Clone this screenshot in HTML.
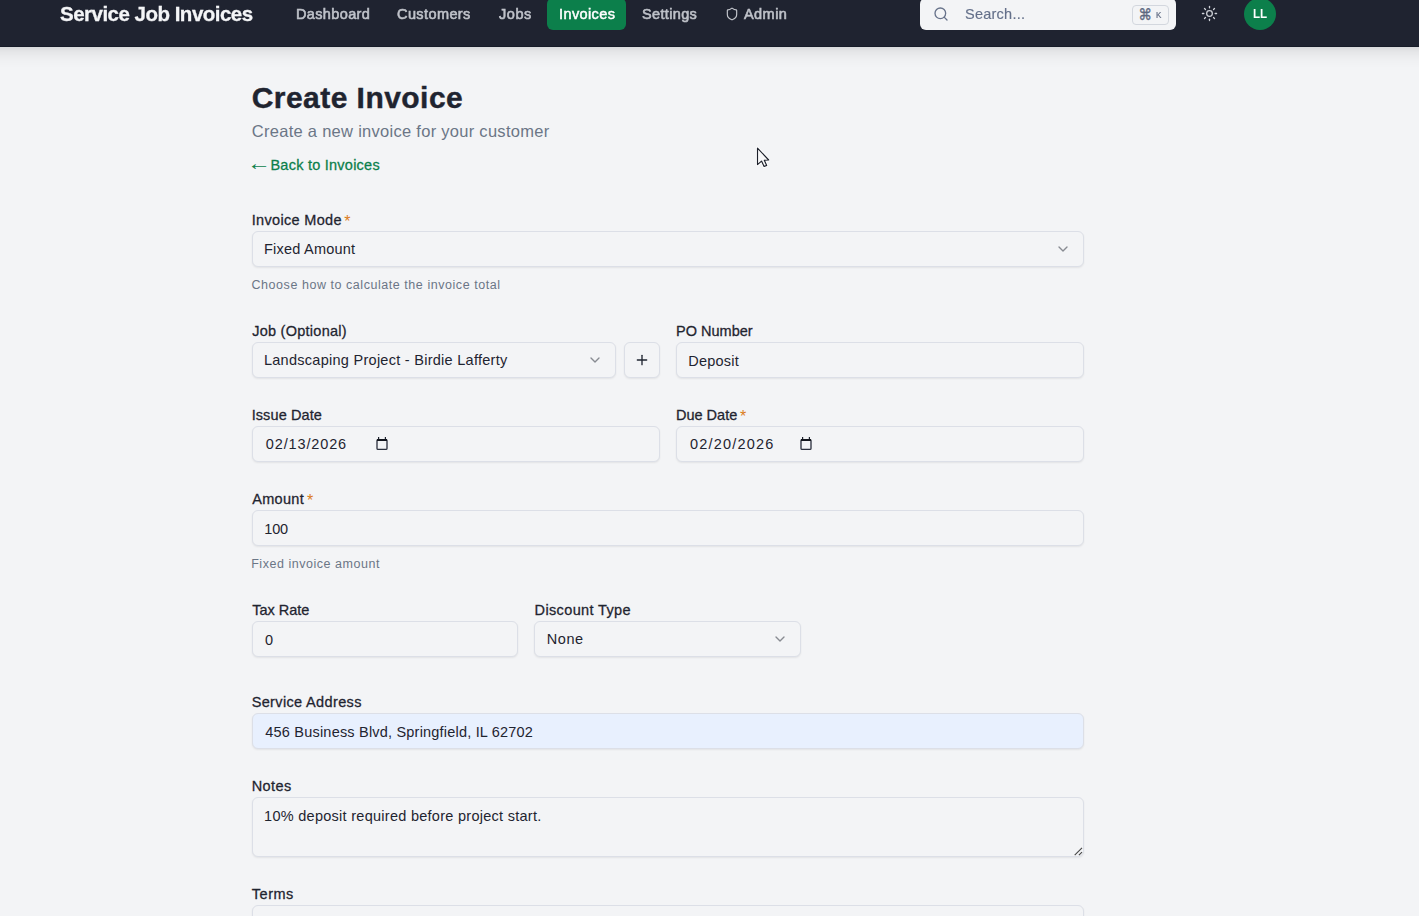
<!DOCTYPE html>
<html lang="en">
<head>
<meta charset="utf-8">
<title>Create Invoice - Service Job Invoices</title>
<style>
*{box-sizing:border-box;margin:0;padding:0}
html,body{width:1419px;height:916px;overflow:hidden}
body{background:#f3f4f6;font-family:"Liberation Sans",sans-serif;position:relative;color:#1f2430}
.t{position:absolute;white-space:nowrap;line-height:1;display:block}
.nav{position:absolute;left:-40px;top:-17px;width:1499px;height:64px;background:#1f2330;border-bottom:1px solid #171c28;box-shadow:0 10px 15px -3px rgba(0,0,0,.09),0 4px 6px -4px rgba(0,0,0,.08)}
.pill{position:absolute;left:547px;top:-2px;width:79px;height:32px;border-radius:6px;background:#0c7f4b}
.search{position:absolute;left:920px;top:-2px;width:256px;height:32px;border-radius:6px;background:#f3f4f6}
.kbd{position:absolute;left:1132px;top:5px;width:37px;height:20px;border:1px solid #d3d7de;border-radius:4px;background:#f3f4f6}
.avatar{position:absolute;left:1244px;top:-2px;width:32px;height:32px;border-radius:50%;background:#0c7f4b}
.box{position:absolute;height:36px;border:1px solid #dcdfe7;border-radius:6px;background:#f3f4f6;box-shadow:0 1px 2px rgba(0,0,0,.07)}
.box.af{background:#e8f0fe}
svg{position:absolute;overflow:visible}
.ic{fill:none;stroke-linecap:round;stroke-linejoin:round}
.g{will-change:transform}
a{text-decoration:none}
h1,p,label,kbd{font-weight:400;font-family:inherit}

</style>
</head>
<body>
<header>
<nav class="nav"></nav>
<div class="pill"></div>
<div class="search"></div>
<div class="kbd"></div>
<div class="avatar"></div>
<!-- shield -->
<svg class="ic" style="left:725px;top:7px" width="14" height="14" viewBox="0 0 24 24" stroke="#c3c6cc" stroke-width="2"><path d="M20 13c0 5-3.5 7.5-7.66 8.95a1 1 0 0 1-.67-.01C7.5 20.5 4 18 4 13V6a1 1 0 0 1 1-1c2 0 4.5-1.2 6.24-2.72a1.17 1.17 0 0 1 1.52 0C14.51 3.81 17 5 19 5a1 1 0 0 1 1 1z"/></svg>
<!-- search -->
<svg class="ic" style="left:933px;top:6px" width="16" height="16" viewBox="0 0 24 24" stroke="#67728a" stroke-width="2"><circle cx="11" cy="11" r="8"/><path d="m21 21-4.3-4.3"/></svg>
<!-- sun -->
<svg class="ic" style="left:1201.4px;top:5.4px" width="17" height="17" viewBox="0 0 24 24" stroke="#cfd2d8" stroke-width="1.8"><circle cx="12" cy="12" r="4"/><path d="M12 2v2"/><path d="M12 20v2"/><path d="m4.93 4.93 1.41 1.41"/><path d="m17.66 17.66 1.41 1.41"/><path d="M2 12h2"/><path d="M20 12h2"/><path d="m6.34 17.66-1.41 1.41"/><path d="m19.07 4.93-1.41 1.41"/></svg>
<span class="t" style="left:1138.6px;top:8.6px;font-size:13.4px;font-family:'DejaVu Sans',sans-serif;color:#5d6880;-webkit-text-stroke:.3px #5d6880;transform:scaleY(1.17);transform-origin:0 11.34px">⌘</span>
<a href="#" class="t g" style="left:59.75px;top:4px;font-size:20.5px;color:#f4f5f7;letter-spacing:-0.509px;font-weight:700;-webkit-text-stroke:0.3px #f4f5f7">Service Job Invoices</a>
<a href="#" class="t g" style="left:295.80px;top:7px;font-size:14.5px;color:#bfc2c9;letter-spacing:0.360px;-webkit-text-stroke:0.6px #bfc2c9">Dashboard</a>
<a href="#" class="t g" style="left:397.10px;top:7px;font-size:14.5px;color:#bfc2c9;letter-spacing:0.406px;-webkit-text-stroke:0.6px #bfc2c9">Customers</a>
<a href="#" class="t g" style="left:498.60px;top:7px;font-size:14.5px;color:#bfc2c9;letter-spacing:0.574px;-webkit-text-stroke:0.6px #bfc2c9">Jobs</a>
<a href="#" class="t g" style="left:558.95px;top:7px;font-size:14.5px;color:#ffffff;letter-spacing:0.394px;-webkit-text-stroke:0.5px #ffffff">Invoices</a>
<a href="#" class="t g" style="left:642.45px;top:7px;font-size:14.5px;color:#bfc2c9;letter-spacing:0.344px;-webkit-text-stroke:0.6px #bfc2c9">Settings</a>
<a href="#" class="t g" style="left:743.75px;top:7px;font-size:14.5px;color:#bfc2c9;letter-spacing:0.441px;-webkit-text-stroke:0.6px #bfc2c9">Admin</a>
<span class="t g" style="left:965.07px;top:7px;font-size:14.5px;color:#64708a;letter-spacing:0.244px;-webkit-text-stroke:0.15px #64708a">Search...</span>
<kbd class="t g" style="left:1155.70px;top:12px;font-size:8px;color:#5f6a82;letter-spacing:0.000px;-webkit-text-stroke:0.2px #5f6a82;transform:scaleY(1.1);transform-origin:0 6px">K</kbd>
<span class="t g" style="left:1252.65px;top:8px;font-size:11.6px;color:#ffffff;letter-spacing:-0.182px;font-weight:700;transform:scaleY(1.1);transform-origin:0 10px">LL</span>
</header>
<main>
<span class="t" style="left:247.1px;top:152.87px;font-size:20px;color:#0c7f4b;transform:scaleX(1.2);transform-origin:0 0">←</span>
<!-- form boxes -->
<div class="box" style="left:252px;top:231px;width:832px"></div>
<div class="box" style="left:252px;top:342px;width:364px"></div>
<div class="box" style="left:624px;top:342px;width:36px"></div>
<div class="box" style="left:676px;top:342px;width:408px"></div>
<div class="box" style="left:252px;top:426px;width:408px"></div>
<div class="box" style="left:676px;top:426px;width:408px"></div>
<div class="box" style="left:252px;top:510px;width:832px"></div>
<div class="box" style="left:252px;top:621px;width:266px"></div>
<div class="box" style="left:534px;top:621px;width:267px"></div>
<div class="box af" style="left:252px;top:713px;width:832px"></div>
<div class="box" style="left:252px;top:797px;width:832px;height:60px"></div>
<div class="box" style="left:252px;top:905px;width:832px;height:60px"></div>

<!-- chevrons -->
<svg class="ic" style="left:1055px;top:241px" width="16" height="16" viewBox="0 0 24 24" stroke="#1f2430" stroke-width="2" opacity=".5"><path d="m6 9 6 6 6-6"/></svg>
<svg class="ic" style="left:587px;top:352px" width="16" height="16" viewBox="0 0 24 24" stroke="#1f2430" stroke-width="2" opacity=".5"><path d="m6 9 6 6 6-6"/></svg>
<svg class="ic" style="left:772.3px;top:631px" width="16" height="16" viewBox="0 0 24 24" stroke="#1f2430" stroke-width="2" opacity=".5"><path d="m6 9 6 6 6-6"/></svg>
<!-- plus -->
<svg class="ic" style="left:634px;top:352px" width="16" height="16" viewBox="0 0 24 24" stroke="#1f2430" stroke-width="2"><path d="M5 12h14"/><path d="M12 5v14"/></svg>
<!-- calendar icons -->
<svg style="left:376px;top:436px" width="12" height="14" viewBox="0 0 12 14"><path fill="#1f2430" d="M2 1h1.2v2H2zM8.8 1H10v2H8.8z"/><rect x="1" y="3.6" width="10" height="9.8" rx="1" fill="none" stroke="#2a2f3d" stroke-width="1.3"/><rect x="1" y="3" width="10" height="2" fill="#12151d"/></svg>
<svg style="left:800px;top:436px" width="12" height="14" viewBox="0 0 12 14"><path fill="#1f2430" d="M2 1h1.2v2H2zM8.8 1H10v2H8.8z"/><rect x="1" y="3.6" width="10" height="9.8" rx="1" fill="none" stroke="#2a2f3d" stroke-width="1.3"/><rect x="1" y="3" width="10" height="2" fill="#12151d"/></svg>
<!-- resize handle -->
<svg style="left:1072px;top:846px" width="12" height="12" viewBox="0 0 12 12"><path d="M2.7 9.2 L10 1.9 M6.9 9.2 L10 6.1" stroke="#484848" stroke-width="1.15" fill="none" stroke-linecap="butt"/></svg>
<!-- asterisks -->
<span class="t" style="left:344.2px;top:214px;font-size:16px;color:#db7c1c">*</span>
<span class="t" style="left:739.9px;top:409px;font-size:16px;color:#db7c1c">*</span>
<span class="t" style="left:306.9px;top:493px;font-size:16px;color:#db7c1c">*</span>
<!-- cursor -->
<svg style="left:756px;top:147px" width="14" height="22" viewBox="0 0 14 22"><path d="M1.5 1.1 L1.5 17.6 L5.5 14.1 L8.1 19.5 L10.7 18.4 L8.3 13.3 L12.7 13 Z" fill="none" stroke="#ffffff" stroke-width="2.8" stroke-linejoin="round"/><path d="M1.5 1.1 L1.5 17.6 L5.5 14.1 L8.1 19.5 L10.7 18.4 L8.3 13.3 L12.7 13 Z" fill="#f8f8f9" stroke="#1c202b" stroke-width="1.15" stroke-linejoin="round"/></svg>
<h1 class="t" style="left:251.70px;top:83px;font-size:30px;color:#1f2430;letter-spacing:0.457px;font-weight:700;-webkit-text-stroke:0.4px #1f2430">Create Invoice</h1>
<p class="t" style="left:251.75px;top:123px;font-size:16.5px;color:#6b7686;letter-spacing:0.281px">Create a new invoice for your customer</p>
<a href="#" class="t" style="left:270.44px;top:158px;font-size:14.5px;color:#0c7f4b;letter-spacing:0.243px;-webkit-text-stroke:0.28px #0c7f4b">Back to Invoices</a>
<label class="t" style="left:251.64px;top:213px;font-size:14.5px;color:#1f2430;letter-spacing:0.336px;-webkit-text-stroke:0.28px #1f2430">Invoice Mode</label>
<label class="t" style="left:252.14px;top:324px;font-size:14.5px;color:#1f2430;letter-spacing:0.264px;-webkit-text-stroke:0.28px #1f2430">Job (Optional)</label>
<label class="t" style="left:675.94px;top:324px;font-size:14.5px;color:#1f2430;letter-spacing:0.025px;-webkit-text-stroke:0.28px #1f2430">PO Number</label>
<label class="t" style="left:251.64px;top:408px;font-size:14.5px;color:#1f2430;letter-spacing:0.108px;-webkit-text-stroke:0.28px #1f2430">Issue Date</label>
<label class="t" style="left:675.94px;top:408px;font-size:14.5px;color:#1f2430;letter-spacing:0.004px;-webkit-text-stroke:0.28px #1f2430">Due Date</label>
<label class="t" style="left:252.29px;top:492px;font-size:14.5px;color:#1f2430;letter-spacing:0.285px;-webkit-text-stroke:0.28px #1f2430">Amount</label>
<label class="t" style="left:252.14px;top:603px;font-size:14.5px;color:#1f2430;letter-spacing:0.002px;-webkit-text-stroke:0.28px #1f2430">Tax Rate</label>
<label class="t" style="left:534.59px;top:603px;font-size:14.5px;color:#1f2430;letter-spacing:0.363px;-webkit-text-stroke:0.28px #1f2430">Discount Type</label>
<label class="t" style="left:251.64px;top:695px;font-size:14.5px;color:#1f2430;letter-spacing:0.361px;-webkit-text-stroke:0.28px #1f2430">Service Address</label>
<label class="t" style="left:251.64px;top:779px;font-size:14.5px;color:#1f2430;letter-spacing:0.410px;-webkit-text-stroke:0.28px #1f2430">Notes</label>
<label class="t" style="left:251.84px;top:887px;font-size:14.5px;color:#1f2430;letter-spacing:0.512px;-webkit-text-stroke:0.28px #1f2430">Terms</label>
<span class="t" style="left:264.00px;top:242px;font-size:14.5px;color:#1f2430;letter-spacing:0.225px">Fixed Amount</span>
<span class="t" style="left:263.95px;top:353px;font-size:14.5px;color:#1f2430;letter-spacing:0.274px">Landscaping Project - Birdie Lafferty</span>
<span class="t" style="left:688.30px;top:354px;font-size:14.5px;color:#1f2430;letter-spacing:0.227px">Deposit</span>
<span class="t" style="left:265.80px;top:437px;font-size:14.5px;color:#1f2430;letter-spacing:0.866px">02/13/2026</span>
<span class="t" style="left:689.95px;top:437px;font-size:14.5px;color:#1f2430;letter-spacing:1.188px">02/20/2026</span>
<span class="t" style="left:264.30px;top:522px;font-size:14.5px;color:#1f2430;letter-spacing:-0.214px">100</span>
<span class="t" style="left:265.10px;top:633px;font-size:14.5px;color:#1f2430;letter-spacing:0.000px">0</span>
<span class="t" style="left:546.85px;top:632px;font-size:14.5px;color:#1f2430;letter-spacing:0.500px">None</span>
<span class="t" style="left:265.35px;top:725px;font-size:14.5px;color:#1f2430;letter-spacing:0.199px">456 Business Blvd, Springfield, IL 62702</span>
<span class="t" style="left:264.10px;top:809px;font-size:14.5px;color:#1f2430;letter-spacing:0.273px">10% deposit required before project start.</span>
<p class="t" style="left:251.50px;top:279px;font-size:12.5px;color:#6b7686;letter-spacing:0.549px">Choose how to calculate the invoice total</p>
<p class="t" style="left:251.15px;top:558px;font-size:12.5px;color:#6b7686;letter-spacing:0.537px">Fixed invoice amount</p>
</main>

</body>
</html>
